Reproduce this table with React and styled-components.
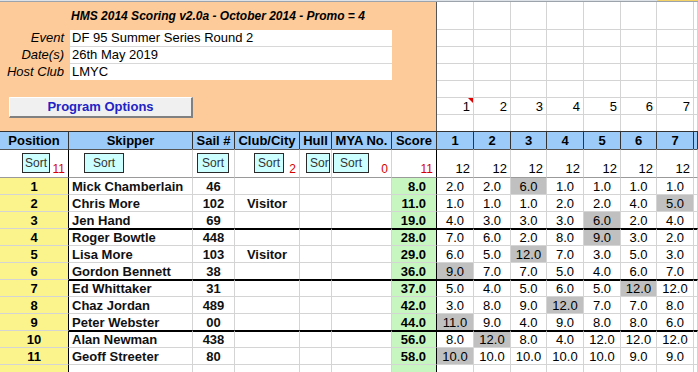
import React from 'react'
import styled, { createGlobalStyle } from 'styled-components'

const GlobalStyle = createGlobalStyle`
  html, body { margin: 0; padding: 0; background: #fff; }
  body { font-family: "Liberation Sans", Arial, sans-serif; }
`

// column widths of the sheet (Position .. Score, then 7 races)
const COLS = '69px 124px 42px 65px 32px 60px 45px 37px 37px 36px 37px 37px 36px 37px 1fr'
const RACE_COLS = '37px 37px 36px 37px 37px 36px 37px 1fr'

const GRID = '#d4d4d4'

const results = [
  [1, 'Mick Chamberlain', '46', '', '8.0', [2, 2, 6, 1, 1, 1, 1], 2],
  [2, 'Chris More', '102', 'Visitor', '11.0', [1, 1, 1, 2, 2, 4, 5], 6],
  [3, 'Jen Hand', '69', '', '19.0', [4, 3, 3, 3, 6, 2, 4], 4],
  [4, 'Roger Bowtle', '448', '', '28.0', [7, 6, 2, 8, 9, 3, 2], 4],
  [5, 'Lisa More', '103', 'Visitor', '29.0', [6, 5, 12, 7, 3, 5, 3], 2],
  [6, 'Gordon Bennett', '38', '', '36.0', [9, 7, 7, 5, 4, 6, 7], 0],
  [7, 'Ed Whittaker', '31', '', '37.0', [5, 4, 5, 6, 5, 12, 12], 5],
  [8, 'Chaz Jordan', '489', '', '42.0', [3, 8, 9, 12, 7, 7, 8], 3],
  [9, 'Peter Webster', '00', '', '44.0', [11, 9, 4, 9, 8, 8, 6], 0],
  [10, 'Alan Newman', '438', '', '56.0', [8, 12, 8, 4, 12, 12, 12], 1],
  [11, 'Geoff Streeter', '80', '', '58.0', [10, 10, 10, 10, 10, 9, 9], 0],
]

const races = [1, 2, 3, 4, 5, 6, 7]

const Sheet = styled.div`
  width: 698px;
  height: 372px;
  overflow: hidden;
  font-size: 13px;
  color: #000;
`

const TopStrip = styled.div`
  display: flex;
  height: 2px;
`
const StripPart = styled.div`
  flex: ${p => (p.$w ? `0 0 ${p.$w}px` : '1')};
  box-sizing: border-box;
  background: ${p => (p.$on ? '#f4d267' : '#dde2e8')};
  border-bottom: 1px solid #9ca3ab;
`

const TopArea = styled.div`
  display: flex;
  height: 129px;
`

const InfoPanel = styled.div`
  box-sizing: border-box;
  width: 437px;
  background: #fdcb9a;
  border-right: 1px solid #555;
  display: flex;
  flex-direction: column;
`

const Title = styled.div`
  height: 27px;
  display: flex;
  align-items: center;
  justify-content: center;
  font-size: 12px;
  font-weight: bold;
  font-style: italic;
`

const Fields = styled.div`
  display: grid;
  grid-template-columns: 70px 322px;
  grid-template-rows: 16px 17px 17px;
  margin-top: 1px;
`
const Label = styled.div`
  text-align: right;
  padding-right: 6px;
  font-style: italic;
  line-height: 16px;
  padding-top: ${p => (p.$first ? 0 : 1)}px;
`
const Field = styled.div`
  box-sizing: border-box;
  background: #fff;
  padding-left: 2px;
  line-height: 16px;
  border-top: ${p => (p.$first ? 'none' : '1px solid #d8d8d8')};
`

const OptionsButton = styled.div`
  box-sizing: border-box;
  width: 184px;
  height: 21px;
  margin: 17px 0 0 9px;
  background: #f0f0f0;
  border-top: 1px solid #fff;
  border-left: 1px solid #fff;
  border-right: 2px solid #808080;
  border-bottom: 2px solid #808080;
  color: #2222c4;
  font-weight: bold;
  text-align: center;
  line-height: 18px;
`

const RaceGrid = styled.div`
  flex: 1;
  display: grid;
  grid-template-columns: ${RACE_COLS};
  grid-template-rows: 27px repeat(6, 17px);
  background: #fff;
`
const GridCell = styled.div`
  position: relative;
  box-sizing: border-box;
  border-right: 1px solid ${GRID};
  border-top: ${p => (p.$first ? 'none' : `1px solid ${GRID}`)};
  text-align: right;
  padding: 1px 3px 0 0;
  line-height: 16px;
`
const CommentMark = styled.span`
  position: absolute;
  top: 0;
  right: 0;
  width: 0;
  height: 0;
  border-top: 5px solid #e00000;
  border-left: 5px solid transparent;
`

const Row = styled.div`
  display: grid;
  grid-template-columns: ${COLS};
  height: ${p => p.$h || 17}px;
`

const HeadCell = styled.div`
  box-sizing: border-box;
  background: #9ccbfa;
  border-top: 1px solid #333;
  border-right: 1px solid #333;
  font-weight: bold;
  text-align: center;
  line-height: 17px;
  white-space: nowrap;
  overflow: hidden;
`

const SortCell = styled.div`
  box-sizing: border-box;
  display: flex;
  align-items: flex-start;
  border-top: 1px solid #555;
  border-right: 1px solid ${p => (p.$edge ? '#000' : GRID)};
  overflow: hidden;
`
const SortButton = styled.div`
  box-sizing: border-box;
  flex: none;
  width: ${p => p.$w}px;
  height: 20px;
  margin: 3px 0 0 ${p => p.$left}px;
  padding: 0 ${p => p.$pad || 0}px;
  background: #ccffff;
  border: 1px solid #2a2a2a;
  color: #333;
  font-size: 12px;
  line-height: 18px;
  text-align: center;
  white-space: nowrap;
  overflow: hidden;
`
const Count = styled.span`
  align-self: flex-end;
  margin: 0 3px 1px auto;
  color: #d40000;
  font-size: 12px;
  line-height: 14px;
`
const RaceCount = styled.span`
  align-self: flex-end;
  margin: 0 3px 1px auto;
  line-height: 15px;
`

const Cell = styled.div`
  box-sizing: border-box;
  border-right: 1px solid ${p => (p.$edge ? '#000' : GRID)};
  border-top: ${p => (p.$thick ? '2px solid #000' : `1px solid ${p.$line || GRID}`)};
  padding-top: ${p => (p.$thick ? 0 : 1)}px;
  line-height: 16px;
  white-space: nowrap;
  overflow: visible;
`
const PosCell = styled(Cell)`
  background: #fbf48c;
  font-weight: bold;
  text-align: center;
`
const NameCell = styled(Cell)`
  font-weight: bold;
  padding-left: 3px;
  color: #111;
`
const CenterCell = styled(Cell)`
  font-weight: bold;
  text-align: center;
  color: #111;
`
const ScoreCell = styled(Cell)`
  background: #c8f6c1;
  font-weight: bold;
  text-align: right;
  padding-right: 10px;
`
const RaceCell = styled(Cell)`
  text-align: center;
  background: ${p => (p.$discard ? '#c0c0c0' : 'transparent')};
`

const sortButtons = [
  { left: 22, w: 28, count: '11', edge: true },
  { left: 15, w: 40 },
  { left: 4, w: 32 },
  { left: 19, w: 30, count: '2' },
  { left: 6, w: 24, pad: 3 },
  { left: 1, w: 36, count: '0' },
]

function DataRow({ r, i }) {
  const thick = i === 3 || i === 6 || i === 9
  const line = i === 0 ? '#9a9a9a' : undefined
  if (!r) {
    return (
      <Row>
        <PosCell $edge $line={line} />
        {Array.from({ length: 5 }).map((_, k) => <Cell key={k} $line={line} />)}
        <ScoreCell $edge $line={line} />
        {races.map(n => <RaceCell key={n} $line={line} />)}
        <Cell $line={line} />
      </Row>
    )
  }
  const [pos, name, sail, club, score, vals, discard] = r
  return (
    <Row>
      <PosCell $edge $line={line}>{pos}</PosCell>
      <NameCell $thick={thick} $line={line}>{name}</NameCell>
      <CenterCell $thick={thick} $line={line}>{sail}</CenterCell>
      <CenterCell $thick={thick} $line={line}>{club}</CenterCell>
      <Cell $thick={thick} $line={line} />
      <Cell $thick={thick} $line={line} />
      <ScoreCell $edge $thick={thick} $line={line}>{score}</ScoreCell>
      {vals.map((v, k) => (
        <RaceCell key={k} $thick={thick} $line={line} $discard={k === discard}>
          {v.toFixed(1)}
        </RaceCell>
      ))}
      <Cell $thick={thick} $line={line} />
    </Row>
  )
}

export default function App() {
  return (
    <Sheet>
      <GlobalStyle />
      <TopStrip>
        <StripPart />
        <StripPart $w={41} $on />
      </TopStrip>

      <TopArea>
        <InfoPanel>
          <Title>HMS 2014 Scoring v2.0a - October 2014 - Promo = 4</Title>
          <Fields>
            <Label $first>Event</Label>
            <Field $first>DF 95 Summer Series Round 2</Field>
            <Label>Date(s)</Label>
            <Field>26th May 2019</Field>
            <Label>Host Club</Label>
            <Field>LMYC</Field>
          </Fields>
          <OptionsButton>Program Options</OptionsButton>
        </InfoPanel>

        <RaceGrid>
          {Array.from({ length: 7 }).map((_, row) =>
            [...races, 0].map(n => (
              <GridCell key={`${row}-${n}`} $first={row === 0}>
                {row === 5 && n > 0 ? n : ''}
                {row === 5 && n === 1 && <CommentMark />}
              </GridCell>
            ))
          )}
        </RaceGrid>
      </TopArea>

      <Row $h={18}>
        <HeadCell>Position</HeadCell>
        <HeadCell>Skipper</HeadCell>
        <HeadCell>Sail #</HeadCell>
        <HeadCell>Club/City</HeadCell>
        <HeadCell>Hull</HeadCell>
        <HeadCell>MYA No.</HeadCell>
        <HeadCell>Score</HeadCell>
        {races.map(n => <HeadCell key={n}>{n}</HeadCell>)}
        <HeadCell />
      </Row>

      <Row $h={28}>
        {sortButtons.map((b, k) => (
          <SortCell key={k} $edge={b.edge}>
            <SortButton $left={b.left} $w={b.w} $pad={b.pad}>Sort</SortButton>
            {b.count && <Count>{b.count}</Count>}
          </SortCell>
        ))}
        <SortCell $edge>
          <Count>11</Count>
        </SortCell>
        {races.map(n => (
          <SortCell key={n}>
            <RaceCount>12</RaceCount>
          </SortCell>
        ))}
        <SortCell />
      </Row>

      {results.map((r, i) => <DataRow key={i} r={r} i={i} />)}
      <DataRow r={null} i={11} />
    </Sheet>
  )
}
